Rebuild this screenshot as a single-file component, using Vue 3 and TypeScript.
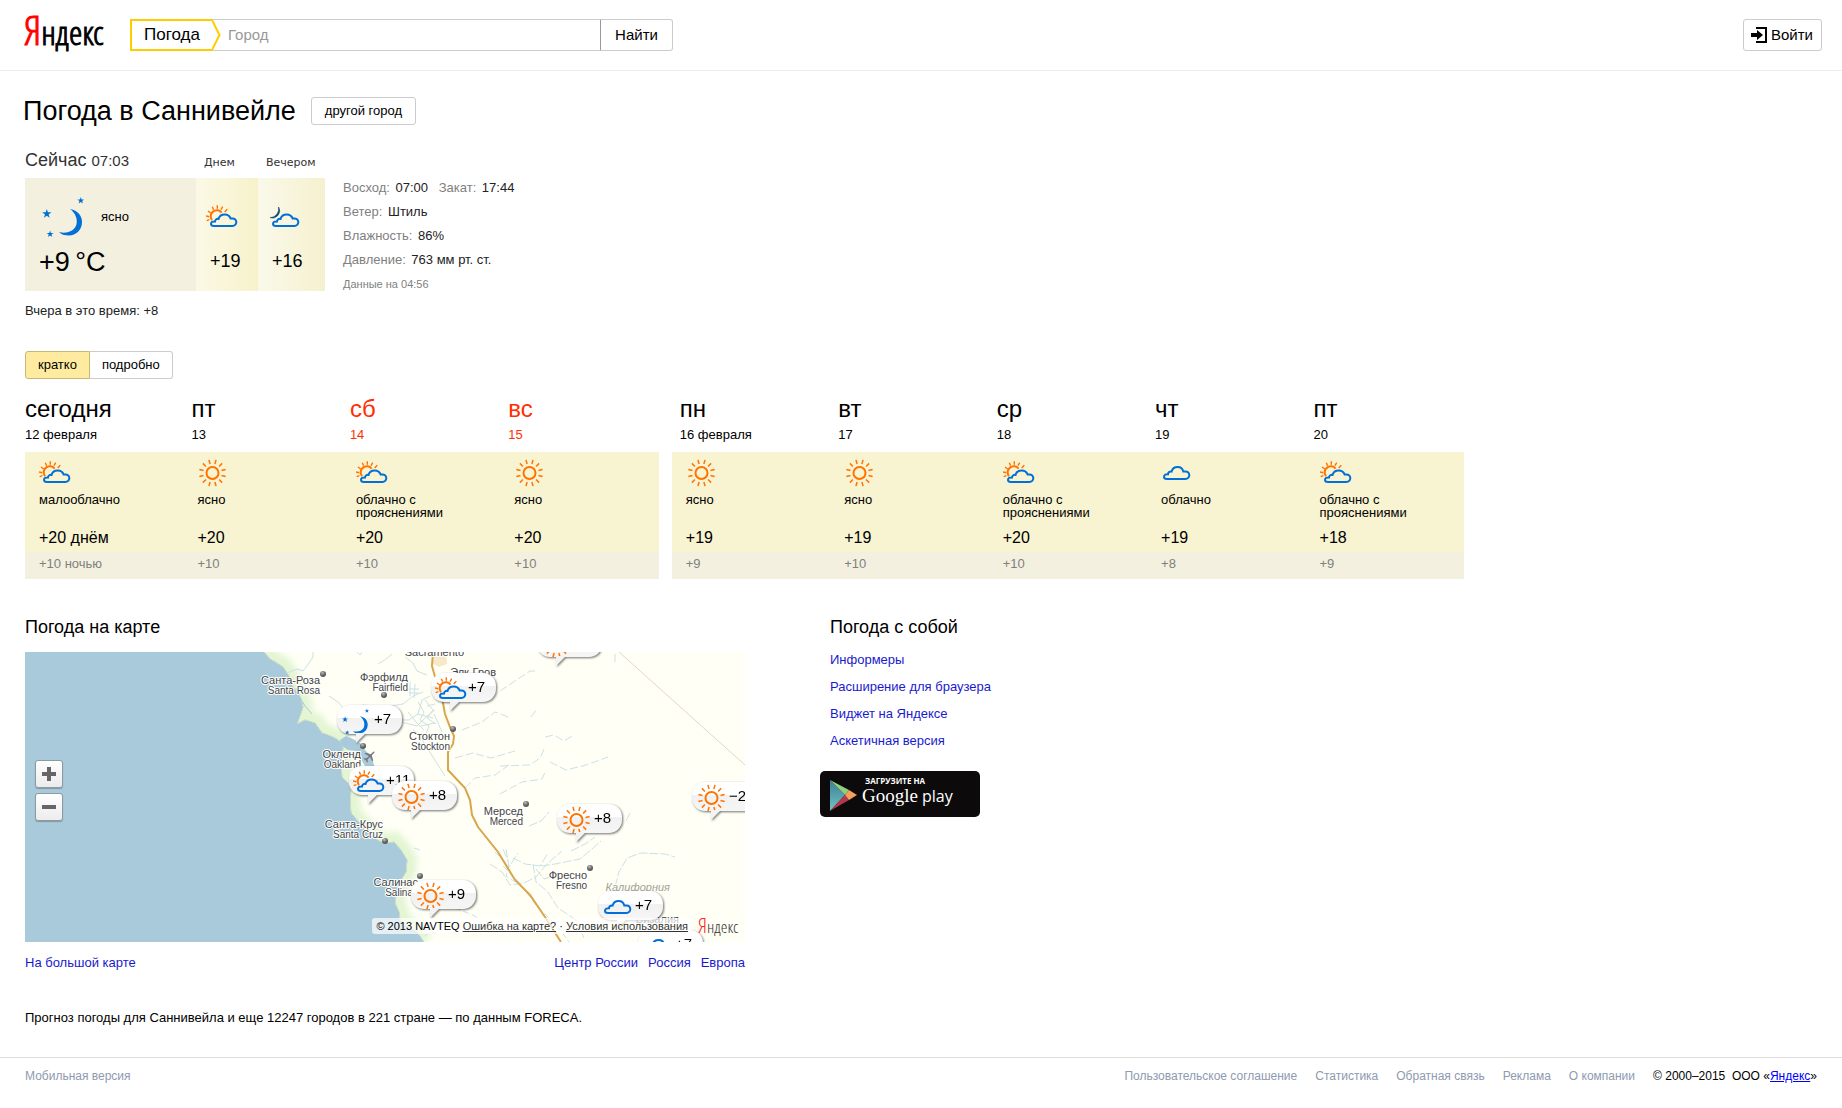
<script setup lang="ts">
import { ref } from 'vue'

type Icon = 'sun' | 'partial' | 'cloud' | 'night' | 'evening'

interface Day {
  name: string
  date: string
  icon: Icon
  text: string
  day: string
  night: string
  weekend?: boolean
}

const weeks: Day[][] = [
  [
    { name: 'сегодня', date: '12 февраля', icon: 'partial', text: 'малооблачно', day: '+20 днём', night: '+10 ночью' },
    { name: 'пт', date: '13', icon: 'sun', text: 'ясно', day: '+20', night: '+10' },
    { name: 'сб', date: '14', icon: 'partial', text: 'облачно с прояснениями', day: '+20', night: '+10', weekend: true },
    { name: 'вс', date: '15', icon: 'sun', text: 'ясно', day: '+20', night: '+10', weekend: true },
  ],
  [
    { name: 'пн', date: '16 февраля', icon: 'sun', text: 'ясно', day: '+19', night: '+9' },
    { name: 'вт', date: '17', icon: 'sun', text: 'ясно', day: '+19', night: '+10' },
    { name: 'ср', date: '18', icon: 'partial', text: 'облачно с прояснениями', day: '+20', night: '+10' },
    { name: 'чт', date: '19', icon: 'cloud', text: 'облачно', day: '+19', night: '+8' },
    { name: 'пт', date: '20', icon: 'partial', text: 'облачно с прояснениями', day: '+18', night: '+9' },
  ],
]

const pins: { x: number; y: number; icon: Icon; t: string }[] = [
  { x: 512, y: -24, icon: 'sun', t: '' },
  { x: 406, y: 21, icon: 'partial', t: '+7' },
  { x: 312, y: 53, icon: 'night', t: '+7' },
  { x: 324, y: 114, icon: 'partial', t: '+11' },
  { x: 367, y: 129, icon: 'sun', t: '+8' },
  { x: 667, y: 130, icon: 'sun', t: '−2' },
  { x: 532, y: 152, icon: 'sun', t: '+8' },
  { x: 386, y: 228, icon: 'sun', t: '+9' },
  { x: 573, y: 239, icon: 'cloud', t: '+7' },
  { x: 613, y: 278, icon: 'cloud', t: '+7' },
]

const cities = [
  { x: 295, y: 32, ru: 'Санта-Роза', en: 'Santa Rosa', dx: 298, dy: 22 },
  { x: 383, y: 29, ru: 'Фэрфилд', en: 'Fairfield', dx: 359, dy: 43 },
  { x: 425, y: 88, ru: 'Стоктон', en: 'Stockton', dx: 428, dy: 77 },
  { x: 336, y: 106, ru: 'Окленд', en: 'Oakland', dx: 338, dy: 94 },
  { x: 358, y: 176, ru: 'Санта-Крус', en: 'Santa Cruz', dx: 360, dy: 189 },
  { x: 393, y: 234, ru: 'Салинас', en: 'Salinas', dx: 395, dy: 224 },
  { x: 498, y: 163, ru: 'Мерсед', en: 'Merced', dx: 501, dy: 152 },
  { x: 562, y: 227, ru: 'Фресно', en: 'Fresno', dx: 565, dy: 216 },
]

const mobileLinks = ['Информеры', 'Расширение для браузера', 'Виджет на Яндексе', 'Аскетичная версия']
const regions = ['Центр России', 'Россия', 'Европа']
const footerLinks = ['Пользовательское соглашение', 'Статистика', 'Обратная связь', 'Реклама', 'О компании']
const rays = Array.from({ length: 12 }, (_, i) => 15 + i * 30)
const mode = ref<'short' | 'full'>('short')
const coast =
  'M239 0L245 7L252 11L258 15L262 21L266 27L268 35L273 41L276 47L278 55L275 64L272 72L280 68L290 71L297 81L303 83L310 86L316 90L318 96L317 104L316 113L317 125L323 131L326 138L325 150L326 161L333 169L342 178L348 185L356 190L364 191L369 190L376 198L382 208L381 220L374 231L371 243L370 251L374 260L375 268L384 275L392 280L399 290'
const land = coast + 'L720 290L720 0Z'
</script>

<template>
  <svg class="sprite" aria-hidden="true">
    <symbol id="i-sun" viewBox="0 0 32 32">
      <g fill="none" stroke="#ff7300">
        <circle cx="15.5" cy="16" r="6" stroke-width="2" />
        <path v-for="a in rays" :key="a" d="M15.5 6.700v-4.300" stroke-width="1.500" :transform="`rotate(${a} 15.5 16)`" />
      </g>
    </symbol>
    <symbol id="i-partial" viewBox="0 0 32 32">
      <g transform="translate(0 4)" fill="none">
        <path d="M6 15.200A6 6 0 0 1 15.600 7.600" stroke="#ff7300" stroke-width="2" />
        <path d="M.7 15.700l2.700-1M0 11l3.300.7M2 6l2.700 2M6.300 1.700l1.300 3M11.300.3v3.400M16.700 1.700l-1.700 3M21.300 4.300l-2.600 2.700" stroke="#ff7300" stroke-width="1.400" />
        <path d="M8 21H26.500A3.800 3.800 0 0 0 26.500 13.400H24.600C23.700 11 21.600 9.400 18.700 9.400C15.600 9.400 13.200 11.300 12.600 13.900C10.500 13.600 9 14.800 9 16.500C6.600 16.300 5 17.200 5 18.800C5 20.200 6.300 21 8 21Z" stroke="#0070d8" stroke-width="2" />
      </g>
    </symbol>
    <symbol id="i-cloud" viewBox="0 0 32 32">
      <path transform="translate(-2 1)" d="M8 21H26.500A3.800 3.800 0 0 0 26.500 13.400H24.300C23.700 11 21.400 8.900 18.700 8.900C15.600 8.900 13.200 11 12.600 13.600C10.500 13.300 9 14.500 9 16.200C6.600 16 5 17 5 18.800C5 20.200 6.300 21 8 21Z" fill="none" stroke="#0070d8" stroke-width="2" />
    </symbol>
    <symbol id="i-evening" viewBox="0 0 32 32">
      <g transform="translate(0 4)">
        <path d="M10.600 2A7.300 7.300 0 0 1 2.100 12.700A9 9 0 0 0 10.600 2Z" fill="#0b3f79" stroke="#0b3f79" stroke-width=".6" />
        <path d="M8 21H26.500A3.800 3.800 0 0 0 26.500 13.400H24.600C23.700 11 21.600 9.400 18.700 9.400C15.600 9.400 13.200 11.300 12.600 13.900C10.500 13.600 9 14.800 9 16.500C6.600 16.300 5 17.200 5 18.800C5 20.200 6.300 21 8 21Z" fill="#f8f6e0" stroke="#0070d8" stroke-width="2" />
      </g>
    </symbol>
    <symbol id="i-moon" viewBox="0 0 42 42">
      <g fill="#0070d8">
        <path d="M28 13C36 14.500 40 20 40 26C40 34 34 39.500 27 39.500C22.500 39.500 19 38.500 17 36C24 38 32 35.500 34.300 29C36 23.500 33.500 17 28 13Z" />
        <path d="M4.800 13l1.100 3.300h3.500l-2.800 2.100 1.100 3.300-2.900-2-2.900 2 1.100-3.300-2.800-2.100h3.500z" />
        <path transform="translate(35.200 -8.800) scale(.75)" d="M4.800 13l1.100 3.300h3.500l-2.800 2.100 1.100 3.300-2.900-2-2.900 2 1.100-3.300-2.800-2.100h3.500z" />
        <path transform="translate(4.500 24.800) scale(.75)" d="M4.800 13l1.100 3.300h3.500l-2.800 2.100 1.100 3.300-2.900-2-2.900 2 1.100-3.300-2.800-2.100h3.500z" />
      </g>
    </symbol>
    <symbol id="i-night" viewBox="0 0 32 32">
      <use href="#i-moon" x="1" y="3" width="27" height="27" />
    </symbol>
  </svg>

  <header class="head">
    <a class="logo" href="#"><span>Я</span>ндекс</a>
    <form class="search" @submit.prevent>
      <a class="service" href="#">
        Погода
        <svg class="arrow" width="9" height="32" viewBox="0 0 9 32" aria-hidden="true"><path d="M0 1L7.500 16L0 31" fill="#fff" stroke="#fc0" stroke-width="2" /></svg>
      </a>
      <input type="text" aria-label="Город" placeholder="Город" />
      <button type="submit">Найти</button>
    </form>
    <button class="login" type="button">
      <svg width="16" height="16" viewBox="0 0 16 16" aria-hidden="true">
        <path d="M5 1H15V15H5" fill="none" stroke="#000" stroke-width="2" />
        <path d="M0 6H6V3L12 8L6 13V10H0Z" />
      </svg>
      Войти
    </button>
  </header>

  <main>
    <div class="title">
      <h1>Погода в Саннивейле</h1>
      <button class="btn" type="button">другой город</button>
    </div>

    <section class="now">
      <div class="grid">
        <h2>Сейчас <small>07:03</small></h2>
        <h3>Днем</h3>
        <h3>Вечером</h3>
        <div class="cell current">
          <div class="state">
            <svg width="42" height="42" aria-hidden="true"><use href="#i-moon" /></svg>
            <span>ясно</span>
          </div>
          <div class="big">+9&thinsp;°C</div>
        </div>
        <div class="cell part">
          <svg width="32" height="32" aria-hidden="true"><use href="#i-partial" /></svg>
          <span>+19</span>
        </div>
        <div class="cell part eve">
          <svg width="32" height="32" aria-hidden="true"><use href="#i-evening" /></svg>
          <span>+16</span>
        </div>
      </div>
      <div class="info">
        <p><i>Восход:</i> 07:00 <i class="set">Закат:</i> 17:44</p>
        <p><i>Ветер:</i> Штиль</p>
        <p><i>Влажность:</i> 86%</p>
        <p><i>Давление:</i> 763 мм рт. ст.</p>
        <p class="stamp">Данные на 04:56</p>
      </div>
    </section>
    <p class="yesterday">Вчера в это время: +8</p>

    <div class="toggle">
      <button type="button" :class="{ on: mode === 'short' }" @click="mode = 'short'">кратко</button>
      <button type="button" :class="{ on: mode === 'full' }" @click="mode = 'full'">подробно</button>
    </div>

    <section class="forecast">
      <table v-for="(week, w) in weeks" :key="w" :style="{ flexGrow: week.length }">
        <thead>
          <tr>
            <th v-for="d in week" :key="d.date" scope="col" :class="{ weekend: d.weekend }">
              <b>{{ d.name }}</b><span>{{ d.date }}</span>
            </th>
          </tr>
        </thead>
        <tbody>
          <tr class="day">
            <td v-for="d in week" :key="d.date">
              <svg width="32" height="32" aria-hidden="true"><use :href="`#i-${d.icon}`" /></svg>
              <div class="desc">{{ d.text }}</div>
              <div class="temp">{{ d.day }}</div>
            </td>
          </tr>
          <tr class="night">
            <td v-for="d in week" :key="d.date">{{ d.night }}</td>
          </tr>
        </tbody>
      </table>
    </section>

    <div class="lower">
      <section class="mapbox">
        <h2>Погода на карте</h2>
        <div class="map">
          <svg class="ground" width="720" height="290" viewBox="0 0 720 290">
            <defs>
              <clipPath id="landclip"><path :d="land" /></clipPath>
              <filter id="soft"><feGaussianBlur stdDeviation="3" /></filter>
              <radialGradient id="dot" cx=".4" cy=".3"><stop offset="0" stop-color="#bbb" /><stop offset="1" stop-color="#5a5a5a" /></radialGradient>
            </defs>
            <path :d="land" fill="#fffff6" />
            <g clip-path="url(#landclip)" fill="none">
              <path :d="coast" stroke="#e3f5d3" stroke-width="20" filter="url(#soft)" />
              <path :d="coast" stroke="#b9c9ae" />
              <path d="M407 0h14l1 12-8 3-7-4z" fill="#f8e8ca" />
            </g>
            <path d="M315 88L321 84L328 87L336 92L340 98L345 103L350 115L342 117L337 109L331 99L323 98L317 94Z" fill="#a9cada" />
            <path d="M274 44L280 54L287 62M271 36L275 43" stroke="#a9cada" stroke-width="1" fill="none" />
            <g class="rivers">
              <path d="M262 21l10-4 6 2 6-8 4-6v-5M332 0l3 3 2-3M353 12l8-5 6-5M304 44l9 6 6 7M318 57l20-4 22 2 18-3 10-8 10-4M372 68l12 0 9-6 4-14 8-4M376 70l16 4 10-10 8-6M385 30v14M390 32l-1 14M382 37h12M384 41h10M380 5l8 6 4 8 10 4" />
              <path d="M393 50l6 10-4 8 9 6-3 8 6 6M400 48l8 10-6 8 9 6M392 62l16 4M396 74l14-3M388 78l16 10M402 54l8-2M396 86l10 16 14 22M409 62l8 18M383 60l8 10 8 8" />
              <path d="M437 78l20-8 13-10 16 6M430 106l18-5 18 5 24-7M440 136l10-10 20-3 14-10M475 39l18-12 12-8 5 0M506 65l6-8M520 85l9-2 10 6 8-5M475 114l30-1 10-7 5-11M525 110l16 8 20-5 22-8M475 142l22-12 20-3 4-9M590 2v8" stroke-dasharray="8 3" />
              <path d="M465 212l12 8 8 13 14-2 12-6 12-14 14-12M478 197l5 12M481 197l3 18 9-14M488 206l12 6 15 2 8-13M511 217l8 10 10-3M516 214l14-2 25-5 12-10 9-8M546 199l14-7 10-7M504 174l12-5 8-9M601 169l5-10M590 235l4-15 8-14 14-5 24 1 10 3M508 212l3 18 12 10 10 16 18 12 8 18" stroke-dasharray="9 2" />
              <path d="M470 200l14 14-3 10 9 6M478 214l16 16 16 22 24 24 10 14M389 196l6 2M430 256l20 8 10 14M400 284l12-10 14 4" stroke-dasharray="6 3" />
            </g>
            <path d="M594 0L720 113" stroke="#ded8c8" fill="none" />
            <path d="M408 0L407 14L412 32L418 51L420 62L425 75L429 84L428 92L423 100L423 118L440 136L445 148L447 163L453 175L473 200L490 228L505 243L520 265L536 290" fill="none" stroke="#d9a54d" stroke-width="2" />
            <path transform="translate(345 104) rotate(45) scale(.9)" fill="#777" d="M-.8-6Q0-8 .8-6V-2L6 1V2.500L.8.8V4.500L3 6.500V7.500L0 6.500L-3 7.500V6.500L-.8 4.500V.8L-6 2.500V1L-.8-2Z" />
            <g v-for="c in cities" :key="c.en">
              <circle :cx="c.dx" :cy="c.dy" r="3" fill="url(#dot)" />
              <text class="ru" :x="c.x" :y="c.y">{{ c.ru }}</text>
              <text class="en" :x="c.x" :y="c.y + 10">{{ c.en }}</text>
            </g>
            <text class="ru" x="439" y="4">Sacramento</text>
            <text class="ru" x="471" y="24">Элк-Гров</text>
            <text class="state-name" x="645" y="239">Калифорния</text>
            <text class="ru" x="654" y="271">Визалия</text>
          </svg>
          <div v-for="(p, i) in pins" :key="i" class="pin" :style="{ left: p.x + 'px', top: p.y + 'px' }">
            <svg class="tail" width="14" height="12" viewBox="0 0 14 12" aria-hidden="true"><path d="M1 0V10L11 0" fill="#f3f3f3" /></svg>
            <svg width="32" height="29" viewBox="0 0 32 29" aria-hidden="true"><use :href="`#i-${p.icon}`" width="32" height="32" /></svg>
            <span>{{ p.t }}</span>
          </div>
          <div class="zoom">
            <button type="button" aria-label="Приблизить"><svg width="14" height="14" viewBox="0 0 14 14"><path d="M5 0h4v5h5v4h-5v5h-4v-5h-5v-4h5z" fill="#666" /></svg></button>
            <button type="button" aria-label="Отдалить"><svg width="14" height="14" viewBox="0 0 14 14"><path d="M0 5h14v4h-14z" fill="#666" /></svg></button>
          </div>
          <div class="copy">
            <p>© 2013 NAVTEQ <a href="#">Ошибка на карте?</a> · <a href="#">Условия использования</a></p>
            <a class="logo mini" href="#"><span>Я</span>ндекс</a>
          </div>
        </div>
        <nav class="maplinks">
          <a href="#">На большой карте</a>
          <a v-for="r in regions" :key="r" href="#">{{ r }}</a>
        </nav>
      </section>
      <aside>
        <h2>Погода с собой</h2>
        <ul>
          <li v-for="l in mobileLinks" :key="l"><a href="#">{{ l }}</a></li>
        </ul>
        <a class="play" href="#">
          <svg width="27" height="31" viewBox="0 0 27 31" aria-hidden="true">
            <defs><linearGradient id="pl" x1="0" y1="0" x2="0" y2="1"><stop offset="0" stop-color="#3d7d96" /><stop offset="1" stop-color="#6fc6c0" /></linearGradient></defs>
            <path d="M0 0L15 15L0 31Z" fill="url(#pl)" />
            <path d="M0 0L19 10L15 15Z" fill="#8fcf7f" />
            <path d="M0 31L19 20L15 15Z" fill="#b8354f" />
            <path d="M19 10L27 15L19 20L15 15Z" fill="#f4a05c" />
          </svg>
          <span class="play-text">
            <small>ЗАГРУЗИТЕ НА</small>
            <span class="brand"><span class="g">Google</span><span class="p">play</span></span>
          </span>
        </a>
      </aside>
    </div>

    <p class="source">Прогноз погоды для Саннивейла и еще 12247 городов в 221 стране — по данным FORECA.</p>
  </main>

  <footer>
    <a class="mobile" href="#">Мобильная версия</a>
    <a v-for="l in footerLinks" :key="l" href="#">{{ l }}</a>
    <span class="owner">© 2000–2015 &nbsp;ООО «<a href="#">Яндекс</a>»</span>
  </footer>
</template>

<style>
body {
  margin: 0;
  background: #fff;
  color: #000;
  font: 13px/20px "Liberation Sans", Arial, sans-serif;
}
</style>

<style scoped>
.sprite { position: absolute; width: 0; height: 0; }
h1, h2, h3, p, ul { margin: 0; padding: 0; font-weight: normal; }
ul { list-style: none; }
svg { display: block; }
a { color: #1a1acd; text-decoration: none; }
button {
  margin: 0;
  font: 13px/20px "Liberation Sans", Arial, sans-serif;
  color: #000;
  background: #fff;
  border: 1px solid #ccc;
  border-radius: 3px;
  cursor: pointer;
}

.head {
  display: flex;
  align-items: center;
  height: 70px;
  box-sizing: border-box;
  padding: 0 20px 0 24px;
  box-shadow: 0 1px #ededed;
}
.head .logo { width: 106px; padding-bottom: 8px; -webkit-text-stroke: 1px; }
.logo {
  color: #000;
  font: 300 34px/32px "Open Sans Condensed Light", "Open Sans Condensed", sans-serif;
}
.logo span { color: #f00; font-size: 40px; }
.search { display: flex; height: 32px; width: 543px; }
.service {
  position: relative;
  box-sizing: border-box;
  width: 82px;
  padding-left: 12px;
  border: 2px solid #fc0;
  border-right: 0;
  color: #000;
  font-size: 17px;
  line-height: 28px;
}
.arrow { position: absolute; left: 80px; top: -2px; }
.search input {
  flex: 1;
  min-width: 0;
  padding: 0 0 0 16px;
  border: solid #ccc;
  border-width: 1px 0;
  outline: 0;
  font: 15px/20px "Liberation Sans", Arial, sans-serif;
}
.search input::placeholder { color: #999; opacity: 1; }
.search button { width: 73px; border-left-color: #999; border-radius: 0 3px 3px 0; font-size: 15px; }
.login {
  display: flex;
  align-items: center;
  gap: 4px;
  height: 32px;
  margin-left: auto;
  padding: 0 8px 0 7px;
  font-size: 15px;
}

main { padding: 25px 25px 0; }
.title { display: flex; align-items: center; gap: 15px; margin-left: -2px; }
h1 { font-size: 27px; line-height: 32px; }
.btn { height: 28px; padding: 0 13px; }

.now { display: flex; gap: 18px; margin-top: 21px; color: #333; }
.grid {
  display: grid;
  grid-template-columns: 171px 62px 67px;
  grid-template-rows: 24px 113px;
  row-gap: 6px;
  align-items: baseline;
}
.now h2 { font-size: 18px; line-height: 24px; }
.now small { font-size: 15px; }
.now h3 { padding-left: 8px; font: 11px/24px "DejaVu Sans", Verdana, sans-serif; }
.cell { align-self: stretch; color: #000; }
.current { background: #f3f0df; padding: 18px 14px 0 17px; }
.state { display: flex; gap: 17px; line-height: 42px; }
.big { margin-left: -3px; font-size: 27px; line-height: 32px; padding-top: 8px; }
.part { padding: 23px 0 0 10px; background: linear-gradient(90deg, #fbf9e6, #f7f2cb); font-size: 18px; line-height: 24px; }
.eve { background: linear-gradient(90deg, #faf9ea, #f5f1cf); }
.part span { display: block; padding: 16px 0 0 4px; }
.info { padding-top: 28px; line-height: 24px; color: #222; }
.info i { margin-right: 2px; font-style: normal; color: #7f7f7f; }
.info .set { margin-left: 7px; }
.info .stamp { font-size: 11px; color: #7f7f7f; }
.yesterday { margin-top: 5px; color: #222; }

.toggle { display: flex; margin-top: 30px; }
.toggle button { height: 28px; padding: 0 12px; border-left: 0; border-radius: 0 3px 3px 0; }
.toggle button:first-child { border-left: 1px solid #ccc; border-radius: 3px 0 0 3px; }
.toggle .on, .toggle .on:first-child { background: #ffeba0; border-color: #c8b878; }

.forecast { display: flex; gap: 13px; max-width: 1439px; margin-top: 16px; }
table { flex: 1 1 0; width: 0; table-layout: fixed; border-collapse: collapse; }
th { padding: 0 0 7px 8px; text-align: left; font-weight: normal; }
table:first-child th:first-child { padding-left: 0; }
th b { display: block; margin-bottom: 2px; font-size: 24px; line-height: 28px; font-weight: normal; }
th span { display: block; }
.weekend { color: #ff2f00; }
td { padding: 0 0 0 14px; vertical-align: top; }
.day { background: #f8f3d0; }
.day td { padding-top: 5px; padding-bottom: 4px; }
.desc { max-width: 110px; height: 26px; margin: 4px 0 9px; line-height: 13px; }
.temp { font-size: 16px; }
.night { background: #f3f0df; color: #808080; line-height: 24px; }
.night td { padding-bottom: 3px; }

.lower { display: flex; gap: 75px; margin-top: 36px; }
.lower h2 { font-size: 18px; line-height: 24px; }
.mapbox { flex: 0 1 720px; min-width: 0; }
.map { position: relative; height: 290px; margin-top: 13px; overflow: hidden; background: #a9cada; }
.rivers path { fill: none; stroke: #cbe1e6; }
text { font-family: "Liberation Sans", Arial, sans-serif; text-anchor: end; fill: #444; stroke: #fff; stroke-width: 2px; paint-order: stroke; stroke-linejoin: round; }
.ru { font-size: 11px; }
.en { font-size: 10px; }
.state-name { font-size: 11px; font-style: italic; fill: #a3a384; }
.pin {
  position: absolute;
  display: flex;
  box-sizing: border-box;
  width: 65px;
  height: 29px;
  padding-left: 4px;
  border-radius: 13px;
  background: linear-gradient(#fff 45%, #f1f1f1 46%, #f6f6f6);
  filter: drop-shadow(1px 1px 1px rgba(0, 0, 0, .55));
  font-size: 15px;
  line-height: 27px;
}
.pin span { margin-left: 1px; white-space: nowrap; }
.tail { position: absolute; left: 18px; top: 28px; }
.zoom { position: absolute; left: 10px; top: 108px; display: grid; gap: 5px; }
.zoom button {
  display: grid;
  place-content: center;
  width: 28px;
  height: 28px;
  padding: 0;
  border-color: #8d9ba1;
  background: linear-gradient(#fff, #ececec);
  box-shadow: 0 1px 1px rgba(0, 0, 0, .25);
}
.copy { position: absolute; right: 5px; bottom: 8px; display: flex; gap: 6px; align-items: center; height: 16px; }
.copy p { padding: 0 4px; border-radius: 3px; background: rgba(255, 255, 255, .7); font-size: 11px; line-height: 16px; white-space: nowrap; }
.copy p a { color: #333; text-decoration: underline; }
.mini { width: 42px; font-size: 17px; line-height: 16px; color: #333; }
.mini span { font-size: 21px; color: #f22; }
.maplinks { display: flex; gap: 10px; margin-top: 11px; }
.maplinks a:first-child { margin-right: auto; }
aside h2, aside ul { padding-left: 10px; }
aside ul { margin-top: 7px; line-height: 27px; }
.play {
  display: flex;
  box-sizing: border-box;
  width: 160px;
  height: 46px;
  margin-top: 17px;
  padding: 9px 0 0 10px;
  gap: 5px;
  border-radius: 5px;
  background: #0c0a0b;
  color: #fff;
}
.play-text { margin-top: -4px; }
.play small { display: block; padding-left: 3px; font: bold 8px/10px "Open Sans", sans-serif; }
.brand { display: flex; align-items: baseline; gap: 4px; }
.g { font: 19px/20px "Liberation Serif", serif; }
.p { font: 16px/20px "Open Sans", sans-serif; }
.source { margin-top: 35px; }

footer {
  display: flex;
  gap: 18px;
  margin-top: 29px;
  padding: 8px 25px 22px;
  border-top: 1px solid #dcdcdc;
  font-size: 12px;
}
footer a { color: #8e9ab0; }
footer .mobile { margin-right: auto; }
footer .owner a { color: #00f; text-decoration: underline; }
</style>
